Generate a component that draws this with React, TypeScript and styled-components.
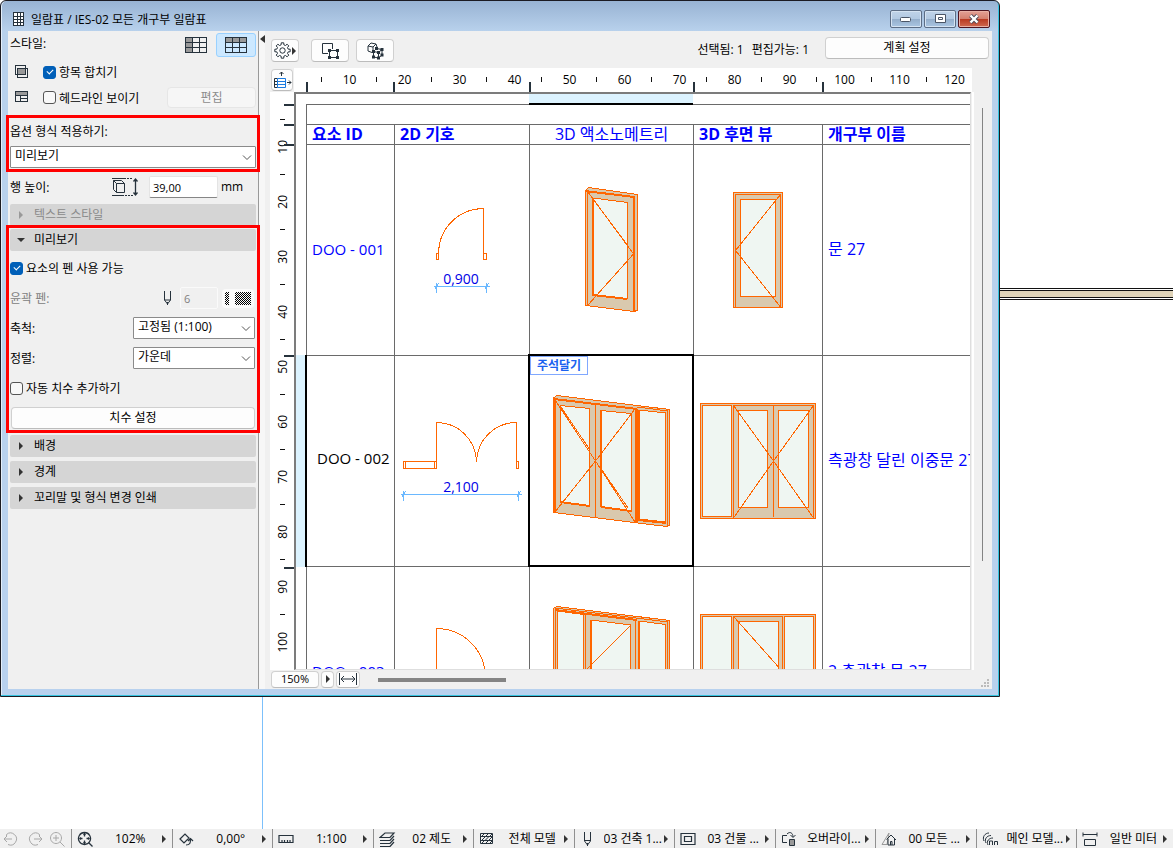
import React from "react";
import styled, { createGlobalStyle, css } from "styled-components";

const ink = "#26323c";
const rule = "#6a6a6a";
const orange = "#ff6600";
const wood = "#d9c9ae";
const glass = "#eff6f2";
const columns = "87px 136px 164px 129px 1fr";

const GlobalStyle = createGlobalStyle`
  *, *::before, *::after { box-sizing: border-box; }
  html, body, #root { height: 100%; }
  body { margin: 0; background: #fff; overflow: hidden; }
  body, button, input, select, table {
    font-family: "Open Sans", "Noto Sans CJK KR", sans-serif;
    font-size: 12px;
    line-height: 16px;
    color: #000;
  }
  svg { display: block; flex: none; }
`;

/* ---------- desktop ---------- */

const Page = styled.div`
  display: flex;
  flex-direction: column;
  height: 100vh;
`;

const Workspace = styled.main`
  position: relative;
  flex: 1;
  min-height: 0;
  background: #fff;
`;

const WallBeam = styled.div`
  position: absolute;
  top: 288px;
  left: 0;
  right: 0;
  height: 12px;
  border: solid #111;
  border-width: 1px 0;
  background: linear-gradient(#fff 1px, #111 1px, #111 2px, #dfd3b8 2px, #dfd3b8 8px, #111 8px, #111 9px, #fff 9px);
`;

const GuideLine = styled.div`
  position: absolute;
  top: 0;
  bottom: 0;
  left: 262px;
  width: 1px;
  background: #7cc0fb;
`;

/* ---------- window frame ---------- */

const Window = styled.section`
  position: absolute;
  inset: 0 173px 132px 0;
  display: flex;
  flex-direction: column;
  padding: 0 7px 7px;
  border: 1px solid #1b1b22;
  border-radius: 6px 6px 0 0;
  background: linear-gradient(#98b3d3, #b8d1ec 30px, #b8d1ee);
  box-shadow: inset -1px -1px 0 #35c4e0, inset 1px 0 0 #e3eefa;
`;

const TitleBar = styled.header`
  display: flex;
  align-items: center;
  gap: 6px;
  height: 30px;
  padding: 6px 2px 0 5px;
`;

const Title = styled.h1`
  flex: 1;
  margin: 0;
  padding-top: 1px;
  font-size: 12px;
  font-weight: 400;
`;

const CaptionButtons = styled.div`
  display: flex;
  gap: 2px;
`;

const CaptionButton = styled.button<{ $close?: boolean }>`
  display: grid;
  place-items: center;
  width: 32px;
  height: 18px;
  padding: 0;
  border: 1px solid ${(p) => (p.$close ? "#4e1420" : "#5c6d85")};
  border-radius: 2px;
  background: ${(p) =>
    p.$close
      ? "linear-gradient(#e3a196, #d4806f 48%, #b93a22 52%, #cf6a52)"
      : "linear-gradient(#c0d3e8, #b2c9e2 48%, #94aecb 52%, #aac6e3)"};
  box-shadow: inset 0 0 0 1px ${(p) => (p.$close ? "#e8b0a5" : "#d5e3f2")};
`;

const Body = styled.div`
  display: flex;
  flex: 1;
  min-height: 0;
  background: #f0f0f0;
`;

/* ---------- side panel ---------- */

const Panel = styled.aside`
  flex: none;
  width: 251px;
  padding: 0 2px;
  border-right: 1px solid #999;
`;

const Collapser = styled.button`
  flex: none;
  width: 6px;
  padding: 4px 0 0 1px;
  border: 0;
  background: #f7f7f7;
  display: flex;
  align-items: flex-start;
`;

const Row = styled.div<{ $h?: number }>`
  display: flex;
  align-items: center;
  height: ${(p) => p.$h ?? 30}px;
`;

const PanelTitle = styled.span`
  padding-bottom: 2px;
`;

const Label = styled.label<{ $muted?: boolean }>`
  padding-top: 2px;
  white-space: nowrap;
  color: ${(p) => (p.$muted ? "#808080" : "#000")};
`;

const Spacer = styled.div`
  flex: 1;
`;

const StyleButton = styled.button<{ $on?: boolean }>`
  display: grid;
  place-items: center;
  width: 40px;
  height: 24px;
  padding: 0;
  border-radius: 3px;
  border: 1px solid ${(p) => (p.$on ? "#99d1ff" : "transparent")};
  background: ${(p) => (p.$on ? "#cce8ff" : "transparent")};
`;

const IconSlot = styled.span`
  flex: none;
  width: 33px;
  padding-left: 5px;
`;

const Tick = styled.input.attrs({ type: "checkbox" })`
  appearance: none;
  flex: none;
  position: relative;
  width: 13px;
  height: 13px;
  margin: 0 3px 0 0;
  border: 1px solid #555;
  border-radius: 3px;
  background: #f8f8f8;
  &:checked {
    border-color: #005fb8;
    background: #005fb8;
  }
  &:checked::after {
    content: "";
    position: absolute;
    left: 3px;
    top: 2px;
    width: 6px;
    height: 4px;
    border: solid #fff;
    border-width: 0 0 1px 1px;
    transform: rotate(-45deg);
  }
`;

const raised = css`
  border: 1px solid #d0d0d0;
  border-bottom-color: #bcbcbc;
  border-radius: 4px;
  background: #fdfdfd;
`;

const PushButton = styled.button<{ $w?: string }>`
  ${raised}
  width: ${(p) => p.$w ?? "100%"};
  height: 22px;
  padding: 0;
  line-height: 16px;
  &:disabled {
    height: 21px;
    border-color: #e6e6e6;
    background: #f6f6f6;
    color: #8c8c8c;
  }
`;

const Callout = styled.div`
  position: relative;
  margin: 0 -4px;
  padding: 0 1px 1px;
  border: 3px solid #ff0000;
`;

const SelectBox = styled.span<{ $w?: string }>`
  position: relative;
  display: block;
  width: ${(p) => p.$w ?? "100%"};
  margin-right: ${(p) => (p.$w ? 1 : 0)}px;
  svg {
    position: absolute;
    right: 4px;
    top: 8px;
    pointer-events: none;
  }
`;

const Select = styled.select`
  appearance: none;
  display: block;
  width: 100%;
  height: 22px;
  padding: 0 20px 2px 4px;
  border: 1px solid #8a8a8a;
  border-radius: 1px;
  background: #fff;
`;

const NumberInput = styled.input<{ $w: number }>`
  width: ${(p) => p.$w}px;
  height: 22px;
  padding: 0 3px;
  border: 1px solid #e4e4e4;
  border-bottom-color: #868686;
  border-radius: 2px;
  background: #fff;
  font-size: 11px;
  &:disabled {
    border-color: #fafafa;
    background: #f0f0f0;
    color: #808080;
  }
`;

const PatternButton = styled.button`
  display: grid;
  place-items: center;
  width: 32px;
  height: 19px;
  margin: 0 2px 0 4px;
  padding: 0;
  border: 0;
  border-radius: 4px;
  background: #fafafa;
`;

const Section = styled.button`
  display: flex;
  align-items: center;
  gap: 9px;
  width: 100%;
  height: 22px;
  margin: 0;
  padding: 0 0 0 7px;
  border: 0;
  border-radius: 2px;
  background: #d5d5d5;
  text-align: left;
  &:disabled {
    color: #8a8a8a;
  }
`;

const Folded = styled.div`
  display: grid;
  gap: 4px;
  padding-top: 2px;
`;

const Gap = styled.div<{ $h: number }>`
  height: ${(p) => p.$h}px;
`;

const PreviewCallout = styled(Callout)`
  margin-top: -1px;
  padding-top: 1px;
`;

const ButtonSlot = styled.div`
  padding: 0 1px;
`;

const HeightField = styled.span`
  display: flex;
  align-items: center;
  gap: 3px;
  width: 116px;
  padding-left: 9px;
`;

const PenSlot = styled.span`
  margin-right: 8px;
`;

/* ---------- schedule view ---------- */

const View = styled.div`
  flex: 1;
  min-width: 0;
  display: flex;
  flex-direction: column;
  padding-left: 5px;
`;

const Toolbar = styled.div`
  display: flex;
  align-items: center;
  height: 37px;
  padding: 0 3px 0 1px;
`;

const ToolButton = styled.button<{ $w: number; $gap: number }>`
  ${raised}
  display: flex;
  align-items: center;
  justify-content: center;
  gap: 1px;
  width: ${(p) => p.$w}px;
  height: 23px;
  margin: 2px ${(p) => p.$gap}px 0 0;
  padding: 0;
`;

const Counter = styled.span`
  margin-right: 8px;
`;

const SchemeSlot = styled.div`
  flex: none;
  width: 164px;
  margin: 0 0 3px 8px;
`;

const Sheet = styled.div`
  display: grid;
  grid-template: 24px minmax(0, 1fr) / 24px minmax(0, 1fr) 20px;
  flex: 1;
  min-height: 0;
`;

const Corner = styled.button`
  ${raised}
  display: grid;
  place-items: center;
  width: 22px;
  height: 22px;
  margin: 1px;
  padding: 0;
`;

const TopRuler = styled.div`
  position: relative;
  display: flex;
  overflow: hidden;
  padding-left: 27px;
  background: #fff;
`;

const TopUnit = styled.span`
  flex: none;
  width: 55px;
  padding: 4px 0 0 2px;
  text-align: center;
  background: linear-gradient(#111, #111) 0 9px / 1px 5px no-repeat;
`;

const TopMarks = styled.div`
  position: absolute;
  inset: 14px 0 0 12px;
  display: grid;
  grid-template-columns: ${columns};
  span {
    border-left: 2px solid ${ink};
  }
`;

const SideRuler = styled.div`
  position: relative;
  overflow: hidden;
  padding-top: 27px;
  background: #fff;
`;

const SideUnit = styled.span`
  display: flex;
  align-items: center;
  justify-content: center;
  height: 55px;
  padding: 1px 0 0 2px;
  background: linear-gradient(#111, #111) 10px 0 / 5px 1px no-repeat;
  span {
    writing-mode: vertical-rl;
    transform: rotate(180deg);
  }
`;

const SideMarks = styled.div`
  position: absolute;
  inset: 12px 0 auto 14px;
  display: grid;
  grid-template-rows: 20px 20px 211px 212px 211px;
  span {
    border-top: 2px solid ${ink};
  }
`;

const Canvas = styled.div`
  display: grid;
  grid-template: 10px minmax(0, 1fr) / 10px minmax(0, 1fr);
  overflow: hidden;
  border: 2px solid #7c7c7c;
  border-right: 1px solid #dedede;
  border-bottom: 1px solid #dedede;
  margin-right: 1px;
  background: #fff;
`;

const ColumnBand = styled.div`
  grid-column: 2;
  display: grid;
  grid-template-columns: ${columns};
`;

const RowBand = styled.div`
  display: grid;
  grid-template-rows: 251px 212px 1fr;
`;

const BandMark = styled.span<{ $side: "column" | "row" }>`
  position: relative;
  z-index: 1;
  background: #dcf3ff;
  ${(p) =>
    p.$side === "column"
      ? css`grid-column: 3; height: 11px; border-bottom: 2px solid #000;`
      : css`grid-row: 2; width: 11px; border-right: 2px solid #000;`}
`;

const Table = styled.table`
  width: 100%;
  table-layout: fixed;
  border-collapse: separate;
  border-spacing: 0;
  border-left: 1px solid ${rule};
  color: #0000ff;
  font-size: 15px;
  line-height: 19px;
  th, td {
    padding: 0;
    border-top: 1px solid ${rule};
    text-align: left;
    white-space: nowrap;
  }
  th + th, td + td {
    border-left: 1px solid ${rule};
  }
`;

const HeadCell = styled.th<{ $plain?: boolean }>`
  height: 20px;
  && {
    padding-left: ${(p) => (p.$plain ? 0 : 5)}px;
    text-align: ${(p) => (p.$plain ? "center" : "left")};
  }
  font-size: 16px;
  font-weight: ${(p) => (p.$plain ? 400 : 700)};
  overflow: hidden;
`;

const Cell = styled.td<{ $text?: boolean; $picked?: boolean; $marked?: boolean }>`
  height: 211px;
  overflow: ${(p) => (p.$picked ? "visible" : "hidden")};
  position: relative;
  ${(p) => p.$text && css`&& { padding: 0 0 2px 5px; }`}
  ${(p) => p.$marked && css`&& { padding: 0 0 6px 10px; color: #000; }`}
  ${(p) =>
    p.$picked &&
    css`
      &::after {
        content: "";
        position: absolute;
        inset: -2px -1px -1px -2px;
        border: 2px solid #000;
        z-index: 1;
      }
    `}
`;

const NameCell = styled(Cell)`
  font-size: 16px;
`;

const NoteTag = styled.span`
  position: absolute;
  top: 0;
  left: 0;
  width: 58px;
  height: 19px;
  border: 1px solid #80a8ff;
  background: #fff;
  color: #1a62f0;
  font-size: 12px;
  font-weight: 700;
  line-height: 18px;
  text-align: center;
`;

const Gutter = styled.div`
  display: flex;
  justify-content: center;
  padding: 16px 2px 109px 0;
  border-left: 2px solid #fff;
`;

const VBar = styled.div`
  width: 1px;
  background: #848484;
`;

const Footer = styled.footer`
  display: flex;
  align-items: center;
  height: 19px;
  padding-left: 1px;
`;

const FootButton = styled.button<{ $w: number; $gap: number }>`
  ${raised}
  display: grid;
  place-items: center;
  width: ${(p) => p.$w}px;
  height: 17px;
  margin-right: ${(p) => p.$gap}px;
  padding: 0 0 1px;
  font-size: 11px;
  line-height: 14px;
`;

const HBar = styled.div`
  width: 128px;
  height: 4px;
  margin-right: auto;
  background: #848484;
`;

/* ---------- status bar ---------- */

const StatusBar = styled.footer`
  flex: none;
  display: flex;
  height: 19px;
  background: #f0f0f0;
`;

const History = styled.div`
  display: flex;
  align-items: center;
  gap: 6px;
  width: 71px;
  padding-left: 3px;
`;

const StatusItem = styled.button`
  display: grid;
  grid-template-columns: 24px minmax(0, 1fr) 8px;
  align-items: center;
  flex: 1;
  min-width: 0;
  padding: 0 4px 0 5px;
  border: 0;
  border-left: 1px solid #909090;
  background: none;
  span {
    overflow: hidden;
    text-align: center;
    white-space: nowrap;
  }
  &:last-child {
    flex: 0 0 97px;
  }
`;

/* ---------- small glyphs ---------- */

const Arrow = ({ color = "#333", down = false }: { color?: string; down?: boolean }) =>
  down ? (
    <svg width="8" height="6" viewBox="0 0 8 6"><path d="M0 1h8L4 5z" fill={color} /></svg>
  ) : (
    <svg width="8" height="8" viewBox="0 0 8 8"><path d="M2 0v8l4-4z" fill={color} /></svg>
  );

const Chevron = () => (
  <svg width="10" height="7" viewBox="0 0 10 7" fill="none" stroke="#555">
    <path d="M1 1.5l4 4 4-4" />
  </svg>
);

const TitleIcon = () => (
  <svg width="12" height="15" viewBox="0 0 12 15" fill="#fff" stroke={ink} shapeRendering="crispEdges">
    <path d="M.5.5h10v13h-10zM4 .5v13M7.500 .5v13M.5 4h10M.5 7.500h10M.5 10.500h10" />
  </svg>
);

const GridIcon = ({ byRow }: { byRow?: boolean }) => (
  <svg width="22" height="17" viewBox="0 0 22 17" fill="none" stroke={ink} shapeRendering="crispEdges">
    <path d={byRow ? "M0 0h22v5H0z" : "M0 0h8v16H0z"} fill="#999" stroke="none" />
    <path d="M.5.5h21v15h-21zM.5 5.500h21M.5 10.500h21M7.500.5v15M14.500.5v15" />
  </svg>
);

const MergeIcon = () => (
  <svg width="14" height="14" viewBox="0 0 14 14" fill="none" stroke={ink} shapeRendering="crispEdges">
    <path d="M.5.5h10v9H.5zM2.500 3.500h10v9h-10z" />
    <path d="M3 4h7v5H3z" fill="#999" stroke="none" />
  </svg>
);

const HeadlineIcon = () => (
  <svg width="14" height="13" viewBox="0 0 14 13" fill="none" stroke={ink} shapeRendering="crispEdges">
    <path d="M0 0h13v4H0z" fill="#999" stroke="none" />
    <path d="M.5.5h12v10H.5zM.5 4.500h12M5.500 4.500v6M5.500 7.500h7" />
  </svg>
);

const RowHeightIcon = () => (
  <svg width="28" height="20" viewBox="0 0 28 20" fill="none" stroke={ink}>
    <path d="M0 1.500h14M0 18.500h12" />
    <path d="M15 1.500h6M13 18.500h8" strokeDasharray="2 1" />
    <path d="M4.500 6.500h8v9h-8zM1.500 3.500h8l3 3M1.500 3.500v9l3 3M1.500 3.500l3 3" />
    <path d="M23.500 2v16M21.500 4.500l2-2.500 2 2.500M21.500 15.500l2 2.500 2-2.500" strokeWidth="1.300" />
  </svg>
);

const PenIcon = () => (
  <svg width="9" height="15" viewBox="0 0 9 15" fill="none" stroke={ink}>
    <path d="M1.500 0v9l3 4 3-4V0M1.500 9h6M4.500 11v3" />
  </svg>
);

const PatternIcon = () => (
  <svg width="28" height="13" viewBox="0 0 28 13" shapeRendering="crispEdges">
    <defs>
      <pattern id="hatch" width="2" height="2" patternUnits="userSpaceOnUse">
        <path d="M0 0h1v1H0zM1 1h1v1H1z" fill="#000" />
      </pattern>
    </defs>
    <path d="M1 0h4v13H1zM11 0h16v13H11z" fill="url(#hatch)" />
  </svg>
);

const gearPath = Array.from({ length: 8 }, (_, i) => {
  const at = (r: number, deg: number) => {
    const a = ((i * 45 + deg) * Math.PI) / 180;
    return `${(8.5 + r * Math.cos(a)).toFixed(2)} ${(8.5 + r * Math.sin(a)).toFixed(2)}`;
  };
  return `${i ? "L" : "M"}${at(5.8, -14)}L${at(7.8, -9)}L${at(7.8, 9)}L${at(5.8, 14)}`;
}).join("") + "z";

const GearIcon = () => (
  <svg width="17" height="17" viewBox="0 0 17 17" fill="none" stroke={ink} strokeLinejoin="round">
    <circle cx="8.500" cy="8.500" r="2.700" />
    <path d={gearPath} />
  </svg>
);

const NodeDots = ({ points }: { points: number[][] }) => (
  <g fill={ink} stroke="none">
    {points.map(([x, y]) => <rect key={`${x}-${y}`} x={x - 1.500} y={y - 1.500} width="3" height="3" />)}
  </g>
);

const Select2DIcon = () => (
  <svg width="19" height="18" viewBox="0 0 19 18" fill="none" stroke={ink}>
    <path d="M7 11.500H1.500v-10h10V7M8.500 8.500h8v7h-8z" />
    <NodeDots points={[[8.500, 8.500], [16.500, 8.500], [8.500, 15.500], [16.500, 15.500]]} />
  </svg>
);

const Select3DIcon = () => (
  <svg width="19" height="18" viewBox="0 0 19 18" fill="none" stroke={ink}>
    <path d="M6 10.500l-4-1.500V4l3-3 5 1 1 3M2 4l5 1v3M7 5l3-3" />
    <path d="M7.500 9.500l5 1v5.500l-5-1zM7.500 9.500l3-3 5.500 1-3.500 3M16 7.500V13l-3.500 3" />
    <NodeDots points={[[7.5, 9.5], [12.5, 10.5], [12.5, 16], [7.5, 15], [10.5, 6.5], [16, 7.5], [16, 13]]} />
  </svg>
);

const CornerIcon = () => (
  <svg width="19" height="18" viewBox="0 0 19 18" fill="none" stroke={ink}>
    <path d="M8.500 5v-4M6.500 3l2-2 2 2M14 11.500h4M16 9.500l2 2-2 2" />
    <path d="M4.500 7.500h-3v9h3M1.500 10.500h3M1.500 13.500h3" />
    <path d="M4.500 7.500h8v9h-8zM4.500 10.500h8M4.500 13.500h8" stroke="#1a7ae0" />
  </svg>
);

const FitIcon = () => (
  <svg width="20" height="12" viewBox="0 0 20 12" fill="none" stroke={ink}>
    <path d="M1.500 0v12M18.500 0v12M3 6h14M6 3L3 6l3 3M14 3l3 3-3 3" />
  </svg>
);

const GripSlot = styled.span`
  align-self: flex-end;
  margin: 0 3px 2px 0;
`;

const GripIcon = () => (
  <svg width="8" height="8" viewBox="0 0 8 8" fill="#bbb">
    <path d="M6 0h2v2H6zM6 3h2v2H6zM3 3h2v2H3zM6 6h2v2H6zM3 6h2v2H3zM0 6h2v2H0z" />
  </svg>
);

/* ---------- drawings of the openings ---------- */

type DrawingProps = { x: number; y: number; w: number; children: React.ReactNode };

const Drawing = ({ x, y, w, children }: DrawingProps) => (
  <svg
    width={w}
    height="210"
    viewBox={`${x} ${y} ${w} 210`}
    fill="none"
    stroke={orange}
    shapeRendering="crispEdges"
  >
    {children}
  </svg>
);

const DimText = styled.text`
  font-size: 14px;
  fill: #0000e6;
  stroke: none;
  text-anchor: middle;
`;

const Dimension = ({ from, to, y, label }: { from: number; to: number; y: number; label: string }) => (
  <>
    <path
      stroke="#6ab8ff"
      d={`M${from - 3} ${y}H${to + 3}M${from} ${y - 4}v10M${to} ${y - 4}v10M${from - 2} ${y + 3}l4-6M${to - 2} ${y + 3}l4-6`}
    />
    <DimText x="461" y={y - 3}>{label}</DimText>
  </>
);

const Plan1 = () => (
  <Drawing x={395} y={145} w={134}>
    <path d="M438.500 253A45 45 0 0 1 483.500 208.500V253M436.500 253.500h2v6h-2zM483.500 253.500h3v6h-3z" />
    <Dimension from={436.5} to={486.5} y={286.5} label="0,900" />
  </Drawing>
);

const Plan2 = () => (
  <Drawing x={395} y={356} w={134}>
    <path d="M403.500 461.500h33v7h-33zM405.500 461.500v7M434.500 461.500v7M436.500 461.500V422.500A40 40 0 0 1 476.500 461.500A40 40 0 0 1 516.500 422.500V461.500M516.500 461.500h2v7h-2z" />
    <Dimension from={403.5} to={518.5} y={494.5} label="2,100" />
  </Drawing>
);

const Plan3 = () => (
  <Drawing x={395} y={567} w={134}>
    <path d="M436.500 677V628.500A49 49 0 0 1 485.500 677" />
  </Drawing>
);

const Axo1 = () => (
  <Drawing x={530} y={145} w={163}>
    <path fill={wood} d="M585.500 191L588.500 187.500L637.500 194.500V310L634.500 311.500L585.500 305.500z" />
    <path fill={glass} d="M593 198L627.500 202.500V299L593 295z" />
    <path d="M587.500 191V305M585.500 190L588 192" />
    <path strokeWidth="2" d="M585 191L634 197V311M593 198V295L627.500 299" />
    <path d="M588 192L633.500 254L588 305" />
    <path d="M593 199L628 246" />
  </Drawing>
);

const Axo2 = () => (
  <Drawing x={530} y={356} w={163}>
    <path fill={wood} d="M553.500 398L556.500 395.500L669.500 409.500V525L666.500 526.500L553.500 512.500z" />
    <path fill={glass} d="M560.500 405.500L589.500 408.500V506L560.500 502.500z" />
    <path fill={glass} d="M601 410.500L631 413.500V511L601 507z" />
    <path fill={glass} d="M639 410L665.500 413V522L639 519z" />
    <path d="M595.500 403V517M637.500 409V522M667.500 411V525M637 407L668 411" />
    <path strokeWidth="2" d="M554.500 398V512M554 399L637 409M601 410V507M635.500 409V522M639 410V520L666 523M560 502L590 506M601 507L631 511" />
    <path d="M555 400L595.500 461L555 512M635 409L595.500 461L635 522" />
    <path d="M561 407L590 450M602 470L628 508" />
  </Drawing>
);

const Axo3 = () => (
  <Drawing x={530} y={567} w={163}>
    <path fill={wood} d="M553.500 608.500L557 606.500L669.500 620.500V680H553.500z" />
    <path fill={glass} d="M557.500 611L583.500 614.500V680H557.500z" />
    <path fill={glass} d="M591 620L630.500 625V680H591z" />
    <path fill={glass} d="M639 621L665.500 624.500V680H639z" />
    <path d="M555.500 609V680M585.500 614V680M635.500 620V680M667.500 622V680M555 608L668 622" />
    <path strokeWidth="2" d="M555 610L637 620M591 620V680M639 621V680" />
    <path d="M631 625L587 669" />
  </Drawing>
);

const Rear1 = () => (
  <Drawing x={694} y={145} w={128}>
    <path fill={wood} d="M733.500 192.500h49v115h-49z" />
    <path d="M735.500 307V194.500H780.500V307" />
    <path fill={glass} d="M740.500 199.500h35v97h-35z" />
    <path d="M780.500 194.500L735.500 250.500L780.500 307" />
  </Drawing>
);

const Rear2 = () => (
  <Drawing x={694} y={356} w={128}>
    <path fill={wood} d="M700.500 403.500h115v115h-115z" />
    <path fill={glass} d="M702.500 405.500h29v111h-29z" />
    <path d="M733.500 518V405.500H813.500V518M773.500 405.500V517" />
    <path fill={glass} d="M738.500 410.500h29v97h-29zM778.500 410.500h30v97h-30z" />
    <path d="M733.500 405.500L773.500 461L733.500 518M813.500 405.500L773.500 461L813.500 518" />
  </Drawing>
);

const Rear3 = () => (
  <Drawing x={694} y={567} w={128}>
    <path fill={wood} d="M700.500 614.500h115V730h-115z" />
    <path fill={glass} d="M702.500 616.500h29V728h-29zM784.500 616.500h29V728h-29z" />
    <path d="M733.500 730V616.500H782.500V730" />
    <path fill={glass} d="M738.500 621.500h40V720h-40z" />
    <path d="M733.500 616.500L778.500 667" />
  </Drawing>
);

/* ---------- status bar glyphs ---------- */

const Glyph = ({ children, muted }: { children: React.ReactNode; muted?: boolean }) => (
  <svg width="17" height="16" viewBox="0 0 17 16" fill="none" stroke={muted ? "#a8a8a8" : ink}>
    {children}
  </svg>
);

const history = [
  { name: "이전 보기", icon: <path d="M3.500 3.500A6 6 0 1 1 5 13.500M1 8h8M4 5L1 8l3 3M3.500 3.500V6" /> },
  { name: "다음 보기", icon: <path d="M13.500 3.500A6 6 0 1 0 12 13.500M16 8H8M13 5l3 3-3 3M13.500 3.500V6" /> },
  { name: "확대", icon: <path d="M7 1.500a5.500 5.500 0 1 0 .01 0M11 11l4.500 4.500M4 7h6M7 4v6" /> },
];

const statusItems = [
  { text: "102%", icon: <path d="M7.500 1.500a6 6 0 1 0 .01 0M12 12l3.500 3.500M7.500 3v2.500M7.500 9.500V12M3 7.500h2.500M9.500 7.500H12M6.500 4l1-1 1 1M6.500 11l1 1 1-1M4 6.500l-1 1 1 1M11 6.500l1 1-1 1" strokeWidth="1.300" /> },
  { text: "0,00°", icon: <path d="M2 8l5-5 4 4-5 5zM8 14c4 0 4.500-2 4.500-6M10 10l2.500-2.500L15 10" strokeWidth="1.200" /> },
  { text: "1:100", icon: <path d="M1 4.500h14v7H1zM4 11.500V9M6.500 11.500V9M9.500 11.500V9M12 11.500V9" strokeWidth="1.200" /> },
  { text: "02 제도", icon: <path d="M1 6.500l5-4.500h9l-4 4.500zM1 9.500h10l4-4.500M1 12.500h10l4-4.500M1 15.500h10l4-4.500" strokeWidth="1.200" /> },
  { text: "전체 모델", icon: <path d="M1.500 2.500h12v10h-12zM1.500 5.500h12M1.500 9.500h12M3 9l3-3M6.500 9l3-3M10 9l3-3M3 5l2-2M7 5l2-2M11 5l2-2M3 12l2-2M7 12l2-2M11 12l2-2" /> },
  { text: "03 건축 1...", icon: <path d="M4.500 1v9l3 4 3-4V1M4.500 9.500h6M7.500 12v3" /> },
  { text: "03 건물 ...", icon: <path d="M1 2.500h14v11H1zM4.500 5.500h7v5h-7z" strokeWidth="1.200" /> },
  { text: "오버라이...", icon: <><path d="M6 11.500H1.500v-7H6M6 3c3-3 6-1 6 3M9.500 4L12 6.500 14.500 4" /><path d="M8.500 8.500h5v6h-5z" fill="#999" /></> },
  { text: "00 모든 ...", icon: <><path d="M1 13.500h5L8 2z" stroke="#999" /><path d="M5.500 8.500L10 4l5 5M7 8v6h6.500V8M9.500 14v-3.500H11V14" /></> },
  { text: "메인 모델...", icon: <path d="M2 10C0 6 3 2 7 2M4 12C2 8 5 4.500 9 4.500M6 14C4 10 7 7 11 7M7.500 14v-4h3v4M12.500 14v-3.500h3V14" /> },
  { text: "일반 미터", icon: <path d="M1 3.500h14M1 1.500v4M15 1.500v4M2.500 8.500h11v6h-11z" /> },
];

const rows = [
  { id: "DOO - 001", plan: <Plan1 />, axo: <Axo1 />, rear: <Rear1 />, name: "문 27" },
  { id: "DOO - 002", plan: <Plan2 />, axo: <Axo2 />, rear: <Rear2 />, name: "측광창 달린 이중문 27", picked: true },
  { id: "DOO - 003", plan: <Plan3 />, axo: <Axo3 />, rear: <Rear3 />, name: "2 측광창 문 27" },
];

const tens = (n: number) => Array.from({ length: n }, (_, i) => (i + 1) * 10);

const SidePanel = () => (
  <Panel>
    <Row $h={28}>
      <PanelTitle>스타일:</PanelTitle>
      <Spacer />
      <StyleButton aria-label="열 배치"><GridIcon /></StyleButton>
      <StyleButton aria-label="행 배치" $on><GridIcon byRow /></StyleButton>
    </Row>
    <Row $h={26}>
      <IconSlot><MergeIcon /></IconSlot>
      <Tick id="merge" defaultChecked />
      <Label htmlFor="merge">항목 합치기</Label>
    </Row>
    <Row $h={25}>
      <IconSlot><HeadlineIcon /></IconSlot>
      <Tick id="headline" />
      <Label htmlFor="headline">헤드라인 보이기</Label>
      <Spacer />
      <PushButton $w="89px" disabled>편집</PushButton>
    </Row>
    <Gap $h={5} />
    <Callout>
      <Row $h={26}><Label htmlFor="format">옵션 형식 적용하기:</Label></Row>
      <Gap $h={2} />
      <SelectBox>
        <Select id="format"><option>미리보기</option></Select>
        <Chevron />
      </SelectBox>
    </Callout>
    <Row>
      <Label htmlFor="height">행 높이:</Label>
      <Spacer />
      <RowHeightIcon />
      <HeightField>
        <NumberInput id="height" $w={69} defaultValue="39,00" />
        <span>mm</span>
      </HeightField>
    </Row>
    <Gap $h={2} />
    <Section disabled><Arrow color="#999" />텍스트 스타일</Section>
    <PreviewCallout>
      <Section><Arrow down />미리보기</Section>
      <Gap $h={2} />
      <Row>
        <Tick id="pens" defaultChecked />
        <Label htmlFor="pens">요소의 펜 사용 가능</Label>
      </Row>
      <Row>
        <Label htmlFor="pen" $muted>윤곽 펜:</Label>
        <Spacer />
        <PenSlot><PenIcon /></PenSlot>
        <NumberInput id="pen" $w={38} defaultValue="6" disabled />
        <PatternButton aria-label="펜 색상"><PatternIcon /></PatternButton>
      </Row>
      <Row>
        <Label htmlFor="scale">축척:</Label>
        <Spacer />
        <SelectBox $w="122px">
          <Select id="scale"><option>고정됨 (1:100)</option></Select>
          <Chevron />
        </SelectBox>
      </Row>
      <Row>
        <Label htmlFor="align">정렬:</Label>
        <Spacer />
        <SelectBox $w="122px">
          <Select id="align"><option>가운데</option></Select>
          <Chevron />
        </SelectBox>
      </Row>
      <Row>
        <Tick id="autodim" />
        <Label htmlFor="autodim">자동 치수 추가하기</Label>
      </Row>
      <Gap $h={4} />
      <ButtonSlot><PushButton>치수 설정</PushButton></ButtonSlot>
    </PreviewCallout>
    <Folded>
      <Section><Arrow />배경</Section>
      <Section><Arrow />경계</Section>
      <Section><Arrow />꼬리말 및 형식 변경 인쇄</Section>
    </Folded>
  </Panel>
);

const ScheduleTable = () => (
  <Table>
    <colgroup>
      <col width="87" />
      <col width="135" />
      <col width="164" />
      <col width="129" />
      <col />
    </colgroup>
    <thead>
      <tr><HeadCell colSpan={5} /></tr>
      <tr>
        <HeadCell>요소 ID</HeadCell>
        <HeadCell>2D 기호</HeadCell>
        <HeadCell $plain>3D 액소노메트리</HeadCell>
        <HeadCell>3D 후면 뷰</HeadCell>
        <HeadCell>개구부 이름</HeadCell>
      </tr>
    </thead>
    <tbody>
      {rows.map((r) => (
        <tr key={r.id}>
          <Cell $text $marked={r.picked}>{r.id}</Cell>
          <Cell>{r.plan}</Cell>
          <Cell $picked={r.picked}>
            {r.axo}
            {r.picked && <NoteTag>주석달기</NoteTag>}
          </Cell>
          <Cell>{r.rear}</Cell>
          <NameCell $text>{r.name}</NameCell>
        </tr>
      ))}
    </tbody>
  </Table>
);

export default function App() {
  return (
    <Page>
      <GlobalStyle />
      <Workspace>
        <WallBeam />
        <GuideLine />
        <Window>
          <TitleBar>
            <TitleIcon />
            <Title>일람표 / IES-02 모든 개구부 일람표</Title>
            <CaptionButtons>
              <CaptionButton aria-label="최소화">
                <svg width="12" height="6" viewBox="0 0 12 6"><rect x=".5" y="1.500" width="10" height="4" rx="1" fill="#fff" stroke="#4a5566" /></svg>
              </CaptionButton>
              <CaptionButton aria-label="최대화">
                <svg width="11" height="10" viewBox="0 0 11 10" fill="#fff" stroke="#4a5566"><path d="M.5.500h10v8H.5zM3.500 3.500h4v2h-4z" /></svg>
              </CaptionButton>
              <CaptionButton aria-label="닫기" $close>
                <svg width="12" height="10" viewBox="0 0 12 10"><path d="M2.500 1.500l7 7M9.500 1.500l-7 7" stroke="#4a4a5a" strokeWidth="4" /><path d="M2.500 1.500l7 7M9.500 1.500l-7 7" stroke="#fff" strokeWidth="2.400" /></svg>
              </CaptionButton>
            </CaptionButtons>
          </TitleBar>
          <Body>
            <SidePanel />
            <Collapser aria-label="패널 접기">
              <svg width="5" height="8" viewBox="0 0 5 8"><path d="M5 0v8L0 4z" fill="#333" /></svg>
            </Collapser>
            <View>
              <Toolbar>
                <ToolButton $w={28} $gap={12} aria-label="설정">
                  <GearIcon />
                  <svg width="4" height="8" viewBox="0 0 4 8"><path d="M0 0v8l4-4z" fill="#333" /></svg>
                </ToolButton>
                <ToolButton $w={38} $gap={7} aria-label="2D에서 선택"><Select2DIcon /></ToolButton>
                <ToolButton $w={38} $gap={0} aria-label="3D에서 선택"><Select3DIcon /></ToolButton>
                <Spacer />
                <Counter>선택됨: 1</Counter>
                <Counter>편집가능: 1</Counter>
                <SchemeSlot><PushButton>계획 설정</PushButton></SchemeSlot>
              </Toolbar>
              <Sheet>
                <Corner aria-label="표 방향"><CornerIcon /></Corner>
                <TopRuler>
                  {tens(12).map((n) => <TopUnit key={n}>{n}</TopUnit>)}
                  <TopMarks><span /><span /><span /><span /><span /></TopMarks>
                </TopRuler>
                <span />
                <SideRuler>
                  {tens(10).map((n) => <SideUnit key={n}><span>{n}</span></SideUnit>)}
                  <SideMarks><span /><span /><span /><span /><span /></SideMarks>
                </SideRuler>
                <Canvas>
                  <ColumnBand><BandMark $side="column" /></ColumnBand>
                  <RowBand><BandMark $side="row" /></RowBand>
                  <ScheduleTable />
                </Canvas>
                <Gutter><VBar /></Gutter>
              </Sheet>
              <Footer>
                <FootButton $w={48} $gap={2}>150%</FootButton>
                <FootButton $w={13} $gap={2} aria-label="확대 메뉴"><Arrow /></FootButton>
                <FootButton $w={24} $gap={18} aria-label="너비에 맞춤"><FitIcon /></FootButton>
                <HBar />
                <GripSlot><GripIcon /></GripSlot>
              </Footer>
            </View>
          </Body>
        </Window>
      </Workspace>
      <StatusBar>
        <History>
          {history.map((h) => <Glyph key={h.name} muted>{h.icon}</Glyph>)}
        </History>
        {statusItems.map((s) => (
          <StatusItem key={s.text}>
            <Glyph>{s.icon}</Glyph>
            <span>{s.text}</span>
            <Arrow />
          </StatusItem>
        ))}
      </StatusBar>
    </Page>
  );
}
